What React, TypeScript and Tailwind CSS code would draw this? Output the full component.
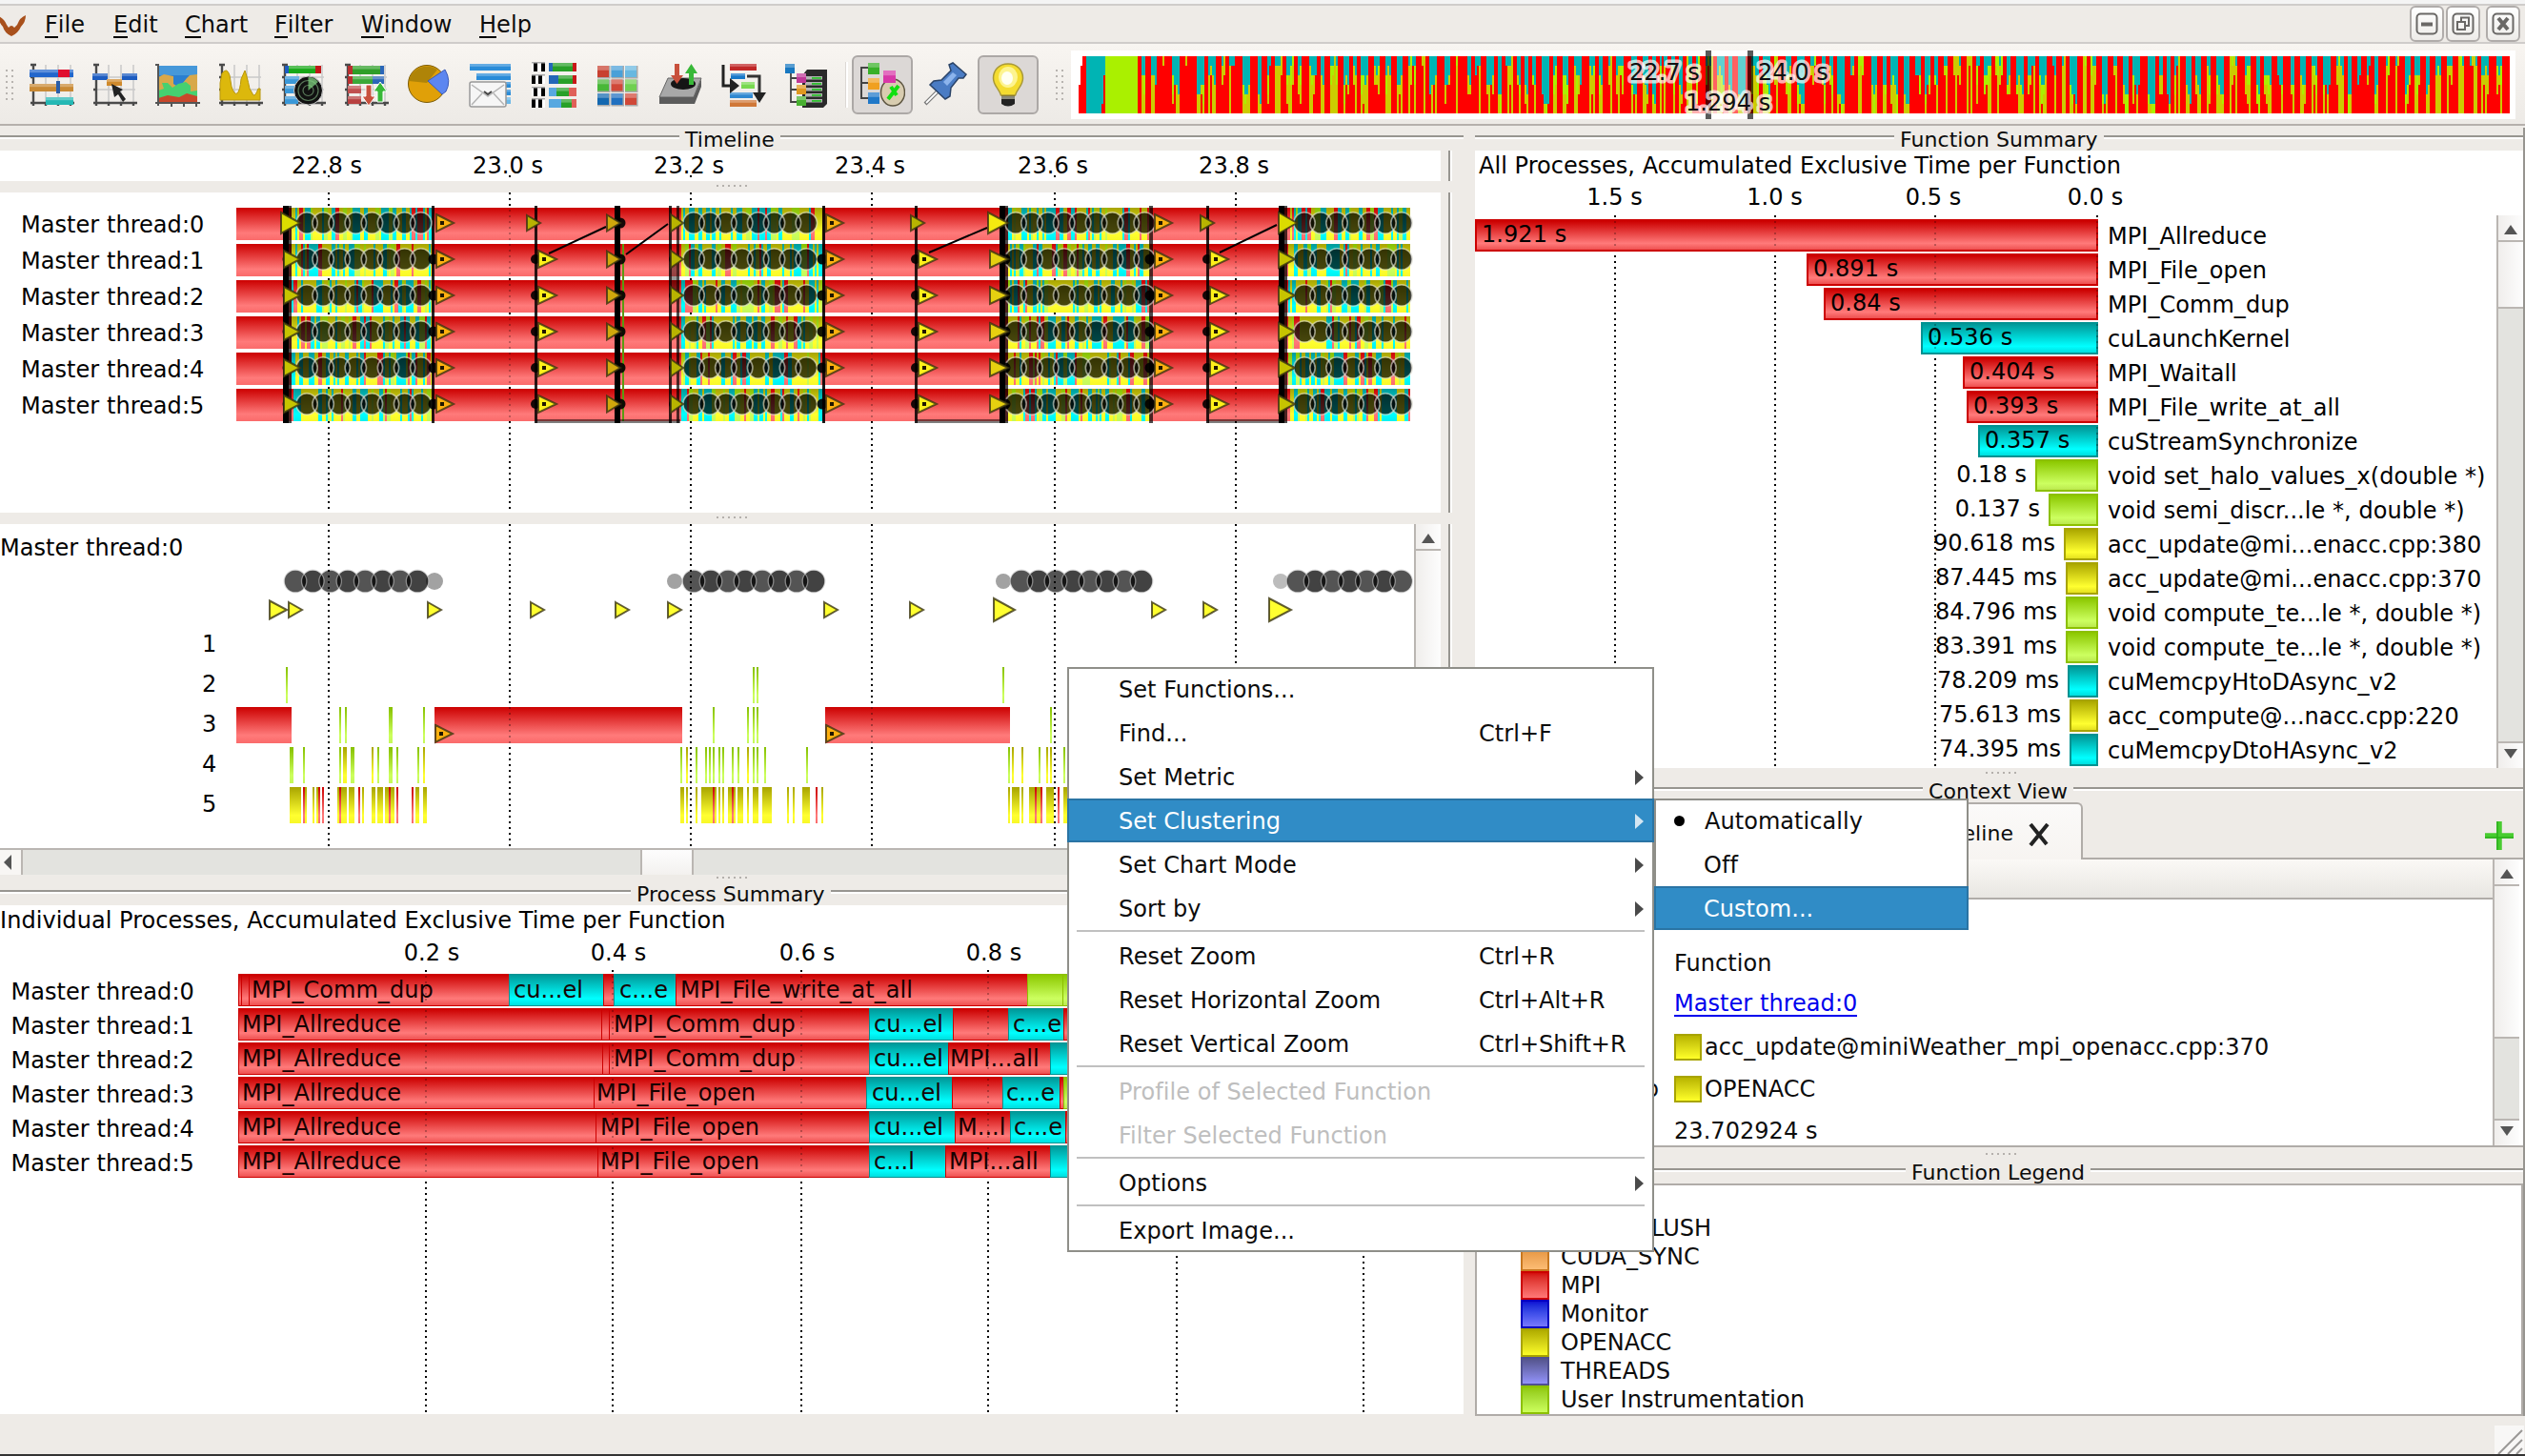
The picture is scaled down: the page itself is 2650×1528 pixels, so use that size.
import React from "react";

/* ---------- shared helpers ---------- */

type Hue = "r" | "c" | "g" | "y";

const EDGE: Record<string, string> = { r: "#cc0000", c: "#009292", g: "#8cc000", y: "#a8a400" };

function rng(seed: number) {
  let s = seed;
  return () => {
    s = (s * 1664525 + 1013904223) % 4294967296;
    return s / 4294967296;
  };
}

function Gradients() {
  const g = (id: string, a: string, b: string, c: string) => (
    <linearGradient key={id} id={id} x1="0" y1="0" x2="0" y2="1">
      <stop offset="0" stopColor={a} />
      <stop offset="0.78" stopColor={b} />
      <stop offset="1" stopColor={c} />
    </linearGradient>
  );
  return (
    <svg width="0" height="0" className="absolute">
      <defs>
        {g("r", "#cc0000", "#ff7a7a", "#fa6a6a")}
        {g("c", "#009a9a", "#00ffff", "#00f0f0")}
        {g("g", "#86c000", "#ccff5c", "#c4f85a")}
        {g("y", "#a8a400", "#ffff30", "#f8f828")}
        {g("rb", "#cc0000", "#ff7a7a", "#ee5050")}
        {g("cb", "#009898", "#00ffff", "#00dede")}
        {g("gb", "#8cc800", "#ccff60", "#bce850")}
        {g("yb", "#aca800", "#ffff30", "#e4e020")}
      </defs>
    </svg>
  );
}

function VDots({ x, y1, y2, o = 1 }: { x: number; y1: number; y2: number; o?: number }) {
  return <line x1={x} x2={x} y1={y1} y2={y2} stroke="#000" strokeWidth={2} strokeDasharray="2 4" opacity={o} shapeRendering="crispEdges" />;
}

function Title({ text, left }: { text: string; left: string }) {
  return (
    <div className="flex h-6 shrink-0 items-start">
      <div className={`mt-2 h-1 shrink-0 border-t-2 border-[#979590] bg-white ${left}`} />
      <div className="h-6 shrink-0 px-[6px] text-[22px] leading-[25px] whitespace-nowrap">{text}</div>
      <div className="mt-2 h-1 flex-1 border-t-2 border-[#979590] bg-white" />
    </div>
  );
}

function Grip({ pad }: { pad: string }) {
  return (
    <div className={`flex gap-1 pt-1 ${pad}`}>
      {[0, 1, 2, 3, 4, 5].map((i) => (
        <div key={i} className="size-[2px] bg-[#b4b0ac]" />
      ))}
    </div>
  );
}

/* ---------- toolbar icons ---------- */

function Frame() {
  return (
    <g>
      <path d="M18 3V43M31 3V43M44 3V43M5 16H46M5 29H46" stroke="#c9c9c9" strokeWidth="1.5" fill="none" />
      <path d="M5 2V46M2 43H48M2 3H8M2 16H5M2 29H5M18 43V46M31 43V46M44 43V46" stroke="#4a4a4a" strokeWidth="2.4" fill="none" />
    </g>
  );
}

function Sq({ x, y, s = 11, h, c }: { x: number; y: number; s?: number; h?: number; c: string }) {
  return (
    <g>
      <rect x={x} y={y} width={s} height={h ?? s} fill={c} />
      <rect x={x} y={y} width={s} height={(h ?? s) / 2.5} fill="#fff" opacity="0.28" />
    </g>
  );
}

const ICONS: React.ReactNode[] = [
  <>
    <Frame />
    <Sq x={1} y={8} s={46} h={8} c="#2266cc" />
    <rect x="31" y="8" width="12" height="8" fill="#e01030" />
    <Sq x={1} y={23} s={46} h={8} c="#c98a35" />
    <rect x="29" y="20" width="4" height="13" fill="#2b5ea8" />
    <Sq x={18} y={37} s={29} h={8} c="#25b8b4" />
  </>,
  <>
    <Frame />
    <Sq x={1} y={12} s={16} h={7} c="#1d5cc0" />
    <Sq x={32} y={12} s={16} h={7} c="#1d5cc0" />
    <Sq x={16} y={18} s={16} h={7} c="#d08a2c" />
    <path d="M21 23l12 6-3 2 6 8-3 3-5-8-4 3z" fill="#222" />
  </>,
  <>
    <rect x="3" y="4" width="42" height="40" fill="#2a7fd0" />
    <rect x="3" y="4" width="42" height="10" fill="#5aa8e0" opacity=".6" />
    <path d="M4 16l6-3 10 2v8l6 4 8-10 3-3 8-1v20H4z" fill="#d8a84a" />
    <path d="M4 30l6-2-2-6h6l5 5 6-4 8-2 5 4v6l7-1v8H4z" fill="#46d070" />
    <path d="M4 38l10-3 12 2 8-4 11 3v8H4z" fill="#c8472a" />
    <path d="M4 2V46M1 3H5M1 43H48M18 43V47M31 43V47M44 43V47" stroke="#555" strokeWidth="2" fill="none" />
  </>,
  <>
    <Frame />
    <path d="M3 40V22L5 12Q10 5 13 14L15 26Q18 35 21 33Q24 30 25 18L29 9Q31 14 34 28L38 35Q40 36 43 28L45 28V40Z" fill="#dcb80c" stroke="#b8960a" strokeWidth="1" />
  </>,
  <>
    <Frame />
    <Sq x={5} y={4} s={38} h={8} c="#18a818" />
    <rect x="5" y="4" width="4" height="8" fill="#1d5cc0" />
    <rect x="37" y="4" width="6" height="8" fill="#c01818" />
    <Sq x={5} y={15} s={15} h={8} c="#3a98d8" />
    <Sq x={5} y={25} s={12} h={8} c="#3a98d8" />
    <Sq x={5} y={36} s={14} h={8} c="#3a98d8" />
    <circle cx="29.500" cy="30" r="15" fill="#111" stroke="#ccc" strokeWidth="1" />
    <circle cx="29.500" cy="30" r="10.500" fill="none" stroke="#5a7a5a" strokeWidth="1.200" />
    <circle cx="29.500" cy="30" r="5.500" fill="none" stroke="#5a7a5a" strokeWidth="1.200" />
    <path d="M29.500 30V16A14 14 0 0 1 40 21Z" fill="#7fd07f" opacity=".75" />
  </>,
  <>
    <Frame />
    <Sq x={5} y={4} s={38} h={9} c="#2f9e28" />
    <rect x="5" y="4" width="5" height="9" fill="#b83030" />
    <rect x="39" y="4" width="4" height="9" fill="#2a66b8" />
    <Sq x={5} y={15} s={38} h={8} c="#2a66b8" />
    <Sq x={5} y={15} s={26} h={8} c="#3aa838" />
    <rect x="5" y="15" width="5" height="8" fill="#b83030" />
    <Sq x={5} y={25} s={14} h={8} c="#c05050" />
    <Sq x={5} y={36} s={14} h={8} c="#b84040" />
    <path d="M24 24h6v12h4l-7 10-7-10h4z" fill="#c8503c" stroke="#fff" />
    <path d="M36 42V31h-4l7-10 7 10h-4v11z" fill="#38b838" stroke="#fff" />
  </>,
  <>
    <circle cx="22" cy="23" r="19.500" fill="#e0a008" stroke="#7a5a04" />
    <path d="M3 20A19.500 19.500 0 0 1 33 8L22 22Z" fill="#9a7808" opacity=".7" />
    <path d="M23 20L41 8Q48 20 42 31L38 34Z" fill="#5c86f0" stroke="#3a5ab8" />
  </>,
  <>
    <Sq x={1} y={2} s={43} h={7} c="#2a8cd8" />
    <Sq x={8} y={12} s={36} h={7} c="#2a8cd8" />
    <Sq x={15} y={21} s={29} h={6} c="#2a8cd8" />
    <Sq x={38} y={29} s={6} h={6} c="#2a8cd8" />
    <Sq x={38} y={37} s={6} h={7} c="#6ab8e8" />
    <rect x="1" y="21" width="38" height="26" rx="2" fill="#f6f6f6" stroke="#999" strokeWidth="1.500" />
    <path d="M3 24L20 36L37 24M3 45L14 33M37 45L26 33" fill="none" stroke="#b4b4b4" strokeWidth="1.500" />
    <path d="M16 31l4 3 4-3" fill="none" stroke="#444" strokeWidth="2" />
  </>,
  <>
    {[0, 13, 26, 38].map((y, i) => (
      <g key={y}>
        <rect x="0" y={y} width="14" height="10" fill="#fff" />
        <path d={`M${i % 2 ? 2 : 4} ${y}V${y + 10}M${i % 2 ? 9 : 12} ${y}V${y + 10}`} stroke="#000" strokeWidth="4" />
        <rect x="0" y={y} width="14" height="1.500" fill="#aaa" />
        <Sq x={18} y={y + 1} s={29} h={9} c="#28a028" />
        <rect x="18" y={y + 1} width={[4, 10, 8, 13][i]} height="9" fill={i > 1 ? "#58a8e0" : "#2468b8"} />
        <rect x={[43, 43, 39, 42][i]} y={y + 1} width={[4, 4, 8, 5][i]} height="9" fill={i > 1 ? "#e06058" : "#c81818"} />
      </g>
    ))}
  </>,
  <>
    {["#c84030", "#4aa0d8", "#68b8e0", "#48b838", "#d04838", "#70d050", "#1468b0", "#2070c0", "#d04838"].map((c, i) => (
      <g key={i}>
        <rect x={3 + (i % 3) * 14.5} y={4 + Math.floor(i / 3) * 14.5} width="13.500" height="13.500" fill="#aaa" />
        <Sq x={3 + (i % 3) * 14.5} y={4 + Math.floor(i / 3) * 14.5} s={12} c={c} />
      </g>
    ))}
  </>,
  <>
    <path d="M11 17H46L38 37H2Z" fill="#a8a8a8" stroke="#666" />
    <path d="M2 37H38L46 18V26L39 44H2Z" fill="#5c5c5c" />
    <ellipse cx="27" cy="23" rx="13" ry="6" fill="#151515" />
    <path d="M18 2h5v12h4l-6.500 9-6.500-9h4z" fill="#c8503c" />
    <path d="M33 24V12h-4l6.500-10 6.500 10h-4v12z" fill="#38b838" />
  </>,
  <>
    <Sq x={10} y={2} s={28} h={7} c="#c02828" />
    <Sq x={11} y={12} s={15} h={6} c="#1878c8" />
    <Sq x={22} y={21} s={14} h={7} c="#78d850" />
    <Sq x={10} y={32} s={24} h={6} c="#3088d0" />
    <Sq x={10} y={40} s={28} h={7} c="#d07838" />
    <path d="M3 3V25H12" stroke="#222" strokeWidth="3" fill="none" />
    <path d="M10 17l10 8-10 8z" fill="#222" />
    <path d="M28 15H41V34" stroke="#333" strokeWidth="3" fill="none" />
    <path d="M34 32h14l-7 11z" fill="#222" />
  </>,
  <>
    <path d="M8 10V42H16M8 17H14M8 29H14" stroke="#444" strokeWidth="1.800" fill="none" />
    <path d="M25 8H46V44L42 48H20V14Z" fill="#2a2a2a" />
    {[15, 21, 27, 33, 39].map((y) => (
      <g key={y}>
        <rect x="23" y={y} width="18" height="3.500" fill="#b4b4b4" />
        <rect x="30" y={y + 1} width="10" height="1.800" fill="#30c030" />
      </g>
    ))}
    <Sq x={2} y={2} s={10} c="#1878c0" />
    <Sq x={14} y={12} s={10} c="#c03898" />
    <Sq x={14} y={24} s={10} c="#e09820" />
    <Sq x={14} y={36} s={10} c="#48b030" />
  </>,
];

const ICON_TREE = (
  <>
    <path d="M12 6H2V38H10M2 22H10" stroke="#444" strokeWidth="2" fill="none" />
    <Sq x={9} y={1} s={12} c="#38b028" />
    <Sq x={9} y={17} s={12} c="#f0a020" />
    <Sq x={9} y={32} s={12} c="#2078c8" />
    <ellipse cx="35" cy="32" rx="12.500" ry="14" fill="#d8ccb0" stroke="#5c5440" strokeWidth="1.500" />
    <path d="M30 39L41 25M33 26L39 35" stroke="#10e010" strokeWidth="4" />
    <Sq x={25} y={9} s={13} c="#d838a8" />
  </>
);
const ICON_PIN = (
  <>
    <path d="M3 44L17 30" stroke="#777" strokeWidth="4" />
    <path d="M4 43L16 31" stroke="#fff" strokeWidth="1.800" />
    <path d="M28 3L32 1L46 13L43 17L38 17L30 27L29 36L24 39L8 24L12 20L20 19L30 9Z" fill="#4a7cc4" stroke="#2b4468" strokeWidth="1.500" />
    <path d="M22 21L32 11L36 14L26 25Z" fill="#8cb4ec" />
  </>
);
const ICON_BULB = (
  <>
    <path d="M17 35H31V44Q24 49 17 44Z" fill="#222" />
    <path d="M17 36H31V39H17Z" fill="#8a8a7a" />
    <path d="M24 2C14 2 8.500 9 8.500 17C8.500 25 14 27 16.500 35H31.500C34 27 39.500 25 39.500 17C39.500 9 34 2 24 2Z" fill="#f4dc30" stroke="#a89838" strokeWidth="1.500" />
    <ellipse cx="24" cy="16" rx="10" ry="11" fill="#fdf490" />
    <ellipse cx="23" cy="17" rx="6" ry="7" fill="#fffff0" />
  </>
);

function Icon({ children }: { children: React.ReactNode }) {
  return (
    <svg viewBox="0 0 48 48" className="size-12 shrink-0">
      {children}
    </svg>
  );
}

function DotHandle() {
  return (
    <div className="grid shrink-0 grid-cols-2 gap-1">
      {Array.from({ length: 12 }, (_, i) => (
        <div key={i} className="size-[2px] bg-[#b8b4b0]" />
      ))}
    </div>
  );
}

/* ---------- trace overview ---------- */

function Navigator() {
  const rnd = rng(77);
  const out: React.ReactNode[] = [];
  const put = (x: number, w: number, a: number, b: number, c: string) =>
    b > a && out.push(<rect key={out.length} x={x} width={w} y={6 + a * 10} height={(b - a) * 10} fill={c} />);
  const RED = "#ff0000", TEAL = "#00b4b4", GREEN = "#aaf000", OLIVE = "#cccc00";
  put(8, 10, 3, 6, RED);
  put(10, 8, 1, 3, RED);
  put(12, 4, 0, 1, RED);
  put(16, 20, 0, 6, TEAL);
  put(34, 2, 2, 5, RED);
  put(32, 4, 5, 6, RED);
  put(36, 34, 0, 6, GREEN);
  let x = 70;
  while (x < 1510) {
    const rw = 4 + 2 * Math.floor(rnd() * 2.3);
    put(x, Math.min(rw, 1510 - x), 0, 6, RED);
    x += rw;
    const n = 2 + Math.floor(rnd() * 3);
    let t = 1 + Math.floor(rnd() * 3);
    for (let i = 0; i < n && x < 1510; i++, x += 2) {
      t = Math.max(0, Math.min(5, t + Math.floor(rnd() * 3) - 1));
      const g = Math.min(6, t + (rnd() < 0.35 ? 1 + Math.floor(rnd() * 2) : 0));
      const o = rnd() < 0.5 ? 6 : Math.min(6, g + Math.floor(rnd() * 3));
      put(x, 2, 0, t, TEAL);
      put(x, 2, t, g, GREEN);
      put(x, 2, g, o, OLIVE);
      put(x, 2, o, 6, RED);
    }
  }
  const halo = { paintOrder: "stroke" as const };
  return (
    <svg width="1516" height="72" className="shrink-0 bg-white text-[24px]">
      <g shapeRendering="crispEdges">{out}</g>
      <rect x="672" y="6" width="38" height="60" fill="#fff" opacity=".38" />
      <rect x="666" y="0" width="6" height="72" fill="#000" opacity=".65" />
      <rect x="710" y="0" width="6" height="72" fill="#000" opacity=".65" />
      <g stroke="#fff" strokeOpacity=".7" strokeWidth="7" strokeLinejoin="round" fill="#111" style={halo}>
        <text x="586" y="31">22.7 s</text>
        <text x="721" y="31">24.0 s</text>
        <text x="645" y="63">1.294 s</text>
      </g>
    </svg>
  );
}

/* ---------- master timeline ---------- */

const TICKS = [345, 535, 725, 915, 1107, 1297];

function Tri({ x, w, y, h, fill, dot }: { x: number; w: number; y: number; h: number; fill: string; dot?: boolean }) {
  return (
    <g>
      <path d={`M${x + 1} ${y - h}L${x + w} ${y}L${x + 1} ${y + h}Z`} fill={fill} stroke="#3a3410" strokeOpacity=".8" strokeWidth="2" />
      {dot && <rect x={x + 5} y={y - 2} width="4" height="4" fill="#201800" />}
    </g>
  );
}

function Timeline() {
  const rnd = rng(4242);
  const rows = [0, 1, 2, 3, 4, 5];
  const noise: [number, number][] = [[306, 453], [715, 863], [1058, 1207], [1352, 1480]];
  const circles: [number, number, number][] = [[322, 17.1, 8], [728, 16.9, 8], [1066, 16.9, 9], [1369, 17, 7]];
  const centres = circles.flatMap(([x, p, n]) => Array.from({ length: n }, (_, i) => x + i * p));
  const lines: [number, number, number][] = [
    [297, 6, 1], [303, 3, 0.7], [453, 3, 0.85], [561, 3, 0.85], [645, 6, 1], [702, 3, 0.8], [705, 5, 0.4], [710, 3, 0.7],
    [863, 3, 0.9], [960, 3, 0.85], [1049, 6, 1], [1055, 3, 0.7], [1206, 4, 0.7], [1266, 3, 0.85], [1342, 6, 1], [1348, 3, 0.7],
  ];
  const Y = "#fff01a", OR = "#ffb010", OL = "#b8b400", YD = "#c6c400";
  return (
    <svg width="1512" height="336" viewBox="0 202 1512 336" className="shrink-0 bg-white">
      {TICKS.map((x) => (
        <VDots key={x} x={x} y1={202} y2={538} />
      ))}
      {rows.map((k) => {
        const y = 218 + 38 * k;
        return (
          <g key={k}>
            <text x="22" y={y + 25.5}>{`Master thread:${k}`}</text>
            <rect x="248" y={y} width="1232" height="34" fill="url(#r)" />
            {TICKS.map((x) => (
              <VDots key={x} x={x} y1={y + ((((202 - y) % 6) + 6) % 6)} y2={y + 34} o={0.25} />
            ))}
            <g shapeRendering="crispEdges">
              {noise.flatMap(([a, b]) => {
                const r: React.ReactNode[] = [];
                for (let x = a; x < b; ) {
                  const w = Math.min(rnd() < 0.6 ? 2 : 4, b - x);
                  const v = rnd();
                  const c: Hue = v < 0.48 ? "y" : v < 0.77 ? "c" : v < 0.89 ? "g" : "r";
                  r.push(<rect key={x} x={x} y={y} width={w} height="34" fill={`url(#${c})`} />);
                  x += w;
                }
                return r;
              })}
            </g>
          </g>
        );
      })}
      <g shapeRendering="crispEdges">
        <rect x="653" y="256" width="1.500" height="186" fill="#5a9a10" />
        {lines.map(([x, w, o]) => (
          <rect key={x} x={x} y={x === 705 ? 270 : 216} width={w} height={x === 705 ? 40 : 228} fill="#000" opacity={o} />
        ))}
        <path d="M563 442H714M962 442H1050M1268 442H1343" stroke="#000" strokeOpacity=".5" strokeWidth="4" />
      </g>
      <path d="M576 266L636 238M657 267L701 235M975 265L1036 239M1280 265L1340 236" stroke="#000" strokeWidth="2" />
      {rows.map((k) => {
        const y = 234 + 38 * k;
        const first = k === 0;
        return (
          <g key={k}>
            {centres.map((x) => (
              <circle key={x} cx={x} cy={y} r="10.800" fill="#000" fillOpacity=".72" />
            ))}
            {centres.map((x) => (
              <circle key={x} cx={x} cy={y} r="11.200" fill="none" stroke="#dcdcd0" strokeOpacity=".62" strokeWidth="1.600" />
            ))}
            {[302, 455, 651, 863, 1055, 1207, 1348].map((x) => !(first && x !== 651) && <circle key={x} cx={x} cy={y} r="5.500" fill="#000" opacity=".9" />)}
            {!first && [562, 707, 961, 1267].map((x) => <circle key={x} cx={x} cy={y} r="5" fill="#000" opacity=".9" />)}
            <Tri x={first ? 294 : 297} w={first ? 21 : 18} y={y} h={first ? 11 : 9} fill={first ? "#dcdc00" : YD} />
            {[457, 866, 1211].map((x) => (
              <Tri key={x} x={x} w={19} y={y} h={9} fill={OR} dot />
            ))}
            {first ? (
              <>
                <Tri x={552} w={15} y={y} h={8} fill={OL} />
                <Tri x={955} w={15} y={y} h={8} fill={OL} />
                <Tri x={1259} w={15} y={y} h={8} fill={OL} />
              </>
            ) : (
              [564, 963, 1269].map((x) => <Tri key={x} x={x} w={20} y={y} h={9} fill={Y} dot />)
            )}
            <Tri x={636} w={15} y={y} h={8.5} fill="#d0a80c" />
            <Tri x={703} w={14} y={y} h={9} fill={OL} />
            <Tri x={first ? 1036 : 1038} w={first ? 22 : 20} y={y} h={first ? 11 : 9} fill={first ? "#f4ea10" : "#e6d010"} />
            <Tri x={1341} w={first ? 20 : 18} y={y} h={first ? 11 : 9} fill={first ? "#dcdc00" : YD} />
          </g>
        );
      })}
    </svg>
  );
}

/* ---------- single process timeline ---------- */

const GREY: [number, number, number, number][] = [
  [310, 18.3, 8, 456], [728, 18, 8, 708], [1072, 18, 8, 1053], [1362, 18.1, 7, 1344],
];

const STRIPES: Record<number, [Hue, number, number][]> = {
  2: [["g", 300, 2], ["g", 790, 2], ["g", 794, 2], ["g", 1052, 2]],
  3: [
    ["r", 248, 58], ["r", 456, 260], ["r", 866, 194], ["g", 356, 2], ["g", 362, 2], ["g", 408, 4], ["g", 444, 2],
    ["g", 748, 2], ["g", 784, 2], ["g", 790, 2], ["g", 794, 2], ["g", 1102, 2],
  ],
  4: [
    ["g", 304, 4], ["g", 318, 2], ["g", 356, 2], ["y", 360, 4], ["g", 368, 4], ["y", 390, 2], ["g", 396, 2], ["g", 408, 4],
    ["g", 416, 2], ["g", 438, 2], ["y", 444, 2], ["g", 714, 2], ["y", 720, 2], ["g", 730, 2], ["g", 740, 2], ["g", 744, 2],
    ["g", 748, 2], ["g", 754, 2], ["g", 758, 2], ["g", 768, 2], ["g", 774, 2], ["y", 784, 2], ["g", 790, 2], ["g", 794, 2],
    ["g", 802, 2], ["g", 846, 2], ["g", 1058, 2], ["y", 1062, 2], ["y", 1072, 2], ["g", 1090, 2], ["y", 1098, 2], ["y", 1102, 2], ["g", 1116, 2],
  ],
  5: [
    ["y", 304, 12], ["r", 318, 2], ["y", 320, 2], ["y", 328, 2], ["y", 332, 2], ["r", 334, 2], ["r", 338, 2], ["y", 354, 10],
    ["r", 356, 2], ["y", 366, 6], ["r", 376, 2], ["y", 380, 2], ["y", 390, 4], ["y", 396, 6], ["y", 404, 10], ["r", 408, 2],
    ["r", 416, 2], ["r", 432, 2], ["y", 436, 4], ["y", 444, 4], ["y", 714, 4], ["y", 720, 2], ["y", 730, 2], ["y", 736, 16],
    ["r", 748, 2], ["y", 754, 2], ["y", 758, 2], ["y", 764, 8], ["r", 768, 2], ["y", 774, 6], ["y", 784, 2], ["y", 790, 6],
    ["y", 800, 10], ["y", 826, 2], ["y", 832, 2], ["y", 842, 8], ["r", 856, 2], ["y", 862, 2], ["y", 1058, 2], ["y", 1062, 8],
    ["y", 1072, 2], ["y", 1080, 14], ["r", 1086, 2], ["r", 1092, 2], ["y", 1098, 8], ["r", 1110, 2], ["y", 1116, 4],
  ],
};

const FLAGS: [number, number, number][] = [
  [282, 19, 9.5], [302, 15, 8], [448, 15, 8], [556, 15, 8], [645, 15, 8], [700, 15, 8], [864, 15, 8],
  [954, 15, 8], [1042, 23, 12], [1208, 15, 8], [1262, 15, 8], [1331, 24, 12],
];

function ProcessTimeline() {
  return (
    <svg width="1484" height="340" viewBox="0 550 1484 340" className="shrink-0 bg-white">
      {GREY.map(([x, p, n, s]) => (
        <g key={x}>
          <circle cx={s} cy="610" r={s === 456 ? 9 : 8} fill={s > 1300 ? "#bcbcbc" : "#a2a2a2"} />
          {Array.from({ length: n }, (_, i) => (
            <circle key={i} cx={x + i * p} cy="610" r="11.500" fill="#000" fillOpacity={i % 2 ? 0.74 : 0.67} />
          ))}
          {Array.from({ length: n }, (_, i) => (
            <circle key={i} cx={x + i * p} cy="610" r="11.800" fill="none" stroke="#c4c4c4" strokeOpacity=".55" strokeWidth="1.300" />
          ))}
        </g>
      ))}
      {TICKS.map((x) => (
        <VDots key={x} x={x} y1={550} y2={890} />
      ))}
      <text x="0" y="583">Master thread:0</text>
      {FLAGS.map(([x, w, h]) => (
        <Tri key={x} x={x} w={w} y={640} h={h} fill="#ffff30" />
      ))}
      {[1, 2, 3, 4, 5].map((n) => (
        <text key={n} x="212" y={641.5 + 42 * n}>{n}</text>
      ))}
      <g shapeRendering="crispEdges">
        {[2, 3, 4, 5].map((n) =>
          STRIPES[n].map(([c, x, w]) => <rect key={`${n}-${x}-${c}`} x={x} y={616 + 42 * n} width={w} height="38" fill={`url(#${c})`} />),
        )}
      </g>
      <VDots x={535} y1={742} y2={780} o={0.3} />
      <VDots x={915} y1={742} y2={780} o={0.3} />
      <Tri x={456} w={19} y={770} h={9} fill="#ffb010" dot />
      <Tri x={866} w={19} y={770} h={9} fill="#ffb010" dot />
    </svg>
  );
}

/* ---------- process summary ---------- */

type Seg = [Hue, number, number, string?, number?];
const SUMMARY: Seg[][] = [
  [["r", 250, 253], ["r", 253, 261], ["r", 261, 534, "MPI_Comm_dup", 263], ["c", 534, 633, "cu...el", 538], ["r", 633, 644], ["c", 644, 709, "c...e", 649], ["r", 709, 1078, "MPI_File_write_at_all", 713], ["g", 1078, 1115], ["g", 1115, 1180]],
  [["r", 250, 631, "MPI_Allreduce", 253], ["r", 631, 639], ["r", 639, 912, "MPI_Comm_dup", 643], ["c", 912, 1000, "cu...el", 916], ["r", 1000, 1058], ["c", 1058, 1116, "c...e", 1062], ["r", 1116, 1180]],
  [["r", 250, 632, "MPI_Allreduce", 253], ["r", 632, 639], ["r", 639, 912, "MPI_Comm_dup", 643], ["c", 912, 995, "cu...el", 916], ["r", 995, 1102, "MPI...all", 996], ["c", 1102, 1180]],
  [["r", 250, 623, "MPI_Allreduce", 253], ["r", 623, 909, "MPI_File_open", 625], ["c", 909, 999, "cu...el", 914], ["r", 999, 1052], ["c", 1052, 1112, "c...e", 1055], ["r", 1112, 1116], ["g", 1116, 1180]],
  [["r", 250, 625, "MPI_Allreduce", 253], ["r", 625, 912, "MPI_File_open", 629], ["c", 912, 1002, "cu...el", 916], ["r", 1002, 1060, "M...l", 1004], ["c", 1060, 1118, "c...e", 1063], ["r", 1118, 1180]],
  [["r", 250, 627, "MPI_Allreduce", 253], ["r", 627, 912, "MPI_File_open", 629], ["c", 912, 992, "c...l", 916], ["r", 992, 1102, "MPI...all", 995], ["c", 1102, 1180]],
];

function ProcessSummary() {
  const ticks = [447, 643, 841, 1037, 1235, 1431];
  return (
    <svg width="1536" height="534" viewBox="0 950 1536 534" className="shrink-0 bg-white">
      <text x="0" y="973.500">Individual Processes, Accumulated Exclusive Time per Function</text>
      {["0.2 s", "0.4 s", "0.6 s", "0.8 s"].map((t, i) => (
        <text key={t} x={ticks[i] + 6} y="1007.500" textAnchor="middle">{t}</text>
      ))}
      {ticks.map((x) => (
        <VDots key={x} x={x} y1={1018} y2={1484} />
      ))}
      {SUMMARY.map((row, k) => {
        const y = 1022 + 36 * k;
        return (
          <g key={k}>
            <text x="11.500" y={y + 26.5}>{`Master thread:${k}`}</text>
            {row.map(([c, a, b]) => (
              <g key={a} shapeRendering="crispEdges">
                <rect x={a} y={y} width={b - a} height="34" fill={EDGE[c]} />
                <rect x={a + 1} y={y + 1} width={b - a - 1.5} height="32" fill={`url(#${c}b)`} />
              </g>
            ))}
            {ticks.slice(0, 4).map((x) => (
              <VDots key={x} x={x} y1={y + 2} y2={y + 32} o={0.25} />
            ))}
            {row.map(([, a, , t, tx]) => t && <text key={a} x={(tx ?? a) + 1} y={y + 24.5} fill="#160000">{t}</text>)}
          </g>
        );
      })}
    </svg>
  );
}

/* ---------- function summary ---------- */

const FUNCS: [Hue, number, string, string][] = [
  ["r", 1548, "1.921 s", "MPI_Allreduce"],
  ["r", 1896, "0.891 s", "MPI_File_open"],
  ["r", 1914, "0.84 s", "MPI_Comm_dup"],
  ["c", 2016, "0.536 s", "cuLaunchKernel"],
  ["r", 2060, "0.404 s", "MPI_Waitall"],
  ["r", 2064, "0.393 s", "MPI_File_write_at_all"],
  ["c", 2076, "0.357 s", "cuStreamSynchronize"],
  ["g", 2136, "0.18 s", "void set_halo_values_x(double *)"],
  ["g", 2150, "0.137 s", "void semi_discr...le *, double *)"],
  ["y", 2166, "90.618 ms", "acc_update@mi...enacc.cpp:380"],
  ["y", 2168, "87.445 ms", "acc_update@mi...enacc.cpp:370"],
  ["g", 2168, "84.796 ms", "void compute_te...le *, double *)"],
  ["g", 2168, "83.391 ms", "void compute_te...le *, double *)"],
  ["c", 2170, "78.209 ms", "cuMemcpyHtoDAsync_v2"],
  ["y", 2172, "75.613 ms", "acc_compute@...nacc.cpp:220"],
  ["c", 2172, "74.395 ms", "cuMemcpyDtoHAsync_v2"],
];

function FunctionSummary() {
  const ticks = [1695, 1863, 2031, 2201];
  return (
    <svg width="1072" height="580" viewBox="1548 226 1072 580" className="shrink-0 bg-white">
      {ticks.map((x) => (
        <VDots key={x} x={x} y1={226} y2={806} />
      ))}
      {FUNCS.map(([c, x, v, n], k) => {
        const y = 230 + 36 * k;
        const inside = k < 7;
        return (
          <g key={k}>
            <g shapeRendering="crispEdges">
              <rect x={x} y={y} width={2202 - x} height="34" fill={EDGE[c]} />
              <rect x={x + 2} y={y + 2} width={2198 - x} height="30" fill={`url(#${c}b)`} />
            </g>
            {inside && ticks.filter((t) => t > x).map((t) => <VDots key={t} x={t} y1={y + 2} y2={y + 32} o={0.25} />)}
            <text x={inside ? x + 7 : x - 9} y={y + 23.5} textAnchor={inside ? "start" : "end"}>{v}</text>
            <text x="2212" y={y + 25.5}>{n}</text>
          </g>
        );
      })}
    </svg>
  );
}

function Arrow({ d, fill = "#555" }: { d: "u" | "d" | "l" | "r"; fill?: string }) {
  const p = { u: "M1 13L8 3L15 13Z", d: "M1 3L8 13L15 3Z", l: "M12 0L4 8L12 16Z", r: "M4 0L13 8L4 16Z" }[d];
  return (
    <svg viewBox="0 0 16 16" className="size-4 shrink-0">
      <path d={p} fill={fill} />
    </svg>
  );
}

function VScroll({ thumb }: { thumb: string }) {
  return (
    <div className="flex w-7 shrink-0 flex-col border-l-2 border-[#bab6b2] bg-[#e3e3df]">
      <div className="flex h-7 items-center justify-center border-b-2 border-[#bab6b2] bg-gradient-to-r from-[#f0eeec] to-[#fdfdfd] pt-1">
        <Arrow d="u" />
      </div>
      <div className={`border-b-2 border-[#bab6b2] bg-gradient-to-r from-[#f0eeec] to-[#fdfdfd] ${thumb}`} />
      <div className="flex-1" />
      <div className="flex h-7 items-center justify-center border-t-2 border-[#bab6b2] bg-gradient-to-r from-[#f0eeec] to-[#fdfdfd] pb-1">
        <Arrow d="d" />
      </div>
    </div>
  );
}

/* ---------- context menu ---------- */

type Item = { t: string; k?: string; sub?: boolean; on?: boolean; off?: boolean; sep?: boolean };
const MENU: Item[] = [
  { t: "Set Functions..." },
  { t: "Find...", k: "Ctrl+F" },
  { t: "Set Metric", sub: true },
  { t: "Set Clustering", sub: true, on: true },
  { t: "Set Chart Mode", sub: true },
  { t: "Sort by", sub: true, sep: true },
  { t: "Reset Zoom", k: "Ctrl+R" },
  { t: "Reset Horizontal Zoom", k: "Ctrl+Alt+R" },
  { t: "Reset Vertical Zoom", k: "Ctrl+Shift+R", sep: true },
  { t: "Profile of Selected Function", off: true },
  { t: "Filter Selected Function", off: true, sep: true },
  { t: "Options", sub: true, sep: true },
  { t: "Export Image..." },
];

function ContextMenu() {
  return (
    <>
      <div className="absolute top-[700px] left-[1120px] flex h-[614px] w-[616px] flex-col bg-white outline-2 -outline-offset-2 outline-[#8f8f89]">
        {MENU.map((m) => (
          <React.Fragment key={m.t}>
            <div
              className={`flex h-[46px] shrink-0 items-center pt-px pr-2 pl-[54px] ${
                m.on ? "relative bg-[#308cc6] text-white outline-2 -outline-offset-2 outline-[#2a74a4]" : m.off ? "text-[#bebebe]" : ""
              }`}
            >
              <span className="w-[378px] whitespace-nowrap">{m.t}</span>
              <span className="flex-1 whitespace-nowrap">{m.k}</span>
              {m.sub && <Arrow d="r" fill={m.on ? "#d4e6f2" : "#4a4a4a"} />}
            </div>
            {m.sep && <div className="mx-[10px] h-1 shrink-0 border-t-2 border-[#c0c0c0]" />}
          </React.Fragment>
        ))}
      </div>
      <div className="absolute top-[838px] left-[1736px] flex w-[330px] flex-col bg-white outline-2 -outline-offset-2 outline-[#8f8f89]">
        <div className="flex h-[46px] items-center gap-[21px] pt-px pl-[21px]">
          <span className="size-[11px] rounded-full bg-black" />
          Automatically
        </div>
        <div className="flex h-[46px] items-center pt-px pl-[52px]">Off</div>
        <div className="relative flex h-[46px] items-center bg-[#308cc6] pt-px pl-[52px] text-white outline-2 -outline-offset-2 outline-[#2a74a4]">Custom...</div>
      </div>
    </>
  );
}

/* ---------- page ---------- */

const LEGEND: [string, string][] = [
  ["CUDA_FLUSH", "bg-linear-to-b from-[#c0a060] to-[#e8d0a0] border-[#a08040]"],
  ["CUDA_SYNC", "bg-linear-to-b from-[#e08c30] to-[#fcbc74] border-[#c87820]"],
  ["MPI", "bg-linear-to-b from-[#d40c0c] to-[#ff7878] border-[#cc0000]"],
  ["Monitor", "bg-linear-to-b from-[#1010d4] to-[#7878ff] border-[#0000c0]"],
  ["OPENACC", "bg-linear-to-b from-[#b0ac00] to-[#fcfc28] border-[#a8a400]"],
  ["THREADS", "bg-linear-to-b from-[#54548c] to-[#9494fc] border-[#505090]"],
  ["User Instrumentation", "bg-linear-to-b from-[#90c808] to-[#ccff5c] border-[#8cc000]"],
];

function MenuEntry({ t, w }: { t: string; w: string }) {
  return (
    <div className={`h-7 shrink-0 leading-7 ${w}`}>
      <span className="inline-block h-[28px] border-b-2 border-black leading-7">{t[0]}</span>
      {t.slice(1)}
    </div>
  );
}

function WinButton({ children }: { children: React.ReactNode }) {
  return (
    <div className="flex h-[38px] w-9 items-center justify-center rounded-md border-2 border-[#b0acaa] bg-gradient-to-b from-white to-[#eeece9]">
      <svg viewBox="0 0 24 24" className="size-6" fill="none" stroke="#6a6866" strokeWidth="2">
        <rect x="1.500" y="1.500" width="21" height="21" rx="4" />
        {children}
      </svg>
    </div>
  );
}

function Swatch() {
  return <span className="h-7 w-[29px] shrink-0 border-2 border-[#a8a400] bg-gradient-to-b from-[#b8b400] to-[#ffff28]" />;
}

export default function App() {
  return (
    <div className="relative flex h-[1528px] w-[2650px] flex-col overflow-hidden bg-[#eeebe7] font-['DejaVu_Sans',sans-serif] text-[24px] leading-7 tracking-[0.05px] text-[#0c0c0c]">
      <Gradients />
      <div className="h-1 shrink-0 bg-[#f4f4f4]" />
      <div className="flex h-[42px] shrink-0 items-start border-y-2 border-[#cfccca] pr-[5px]">
        <svg width="28" height="24" viewBox="0 0 28 24" className="mt-[9px] shrink-0">
          <path d="M-2 2Q4 4 7 11L9 14Q12 10 15 14L18 11Q21 3 27 1Q27 8 22 13Q19 20 12 23Q5 20 3 13Q-1 9-2 2Z" fill="#a8501c" />
        </svg>
        <div className="flex pt-[6px] pl-[19px]">
          <MenuEntry t="File" w="w-[72px]" />
          <MenuEntry t="Edit" w="w-[75px]" />
          <MenuEntry t="Chart" w="w-[94px]" />
          <MenuEntry t="Filter" w="w-[91px]" />
          <MenuEntry t="Window" w="w-[124px]" />
          <MenuEntry t="Help" w="w-[70px]" />
        </div>
        <div className="ml-auto flex gap-[2px]">
          <WinButton>
            <path d="M6 12.500H18" strokeWidth="4" />
          </WinButton>
          <WinButton>
            <path d="M10 10V5.500H18V14H14M6 10H14V18H6Z" />
          </WinButton>
          <div className="w-[2px]" />
          <WinButton>
            <path d="M7 6L17 18M17 6L7 18" strokeWidth="4" />
          </WinButton>
        </div>
      </div>
      <div className="flex h-[86px] shrink-0 items-center border-b-2 border-[#b5b0ac] bg-gradient-to-b from-[#f8f5f1] to-[#edeae6] pt-[2px] pl-[6px]">
        <DotHandle />
        <div className="flex gap-[18px] pl-4">
          {ICONS.map((ic, i) => (
            <Icon key={i}>{ic}</Icon>
          ))}
        </div>
        <div className="ml-[17px] h-12 w-[3px] border-l border-[#dcd8d4] bg-white" />
        <div className="ml-1 flex h-[62px] w-16 items-center justify-center rounded-md border-2 border-[#aca8a6] bg-[#dcd8d6]">
          <Icon>{ICON_TREE}</Icon>
        </div>
        <div className="mx-[10px]">
          <Icon>{ICON_PIN}</Icon>
        </div>
        <div className="flex h-[62px] w-16 items-center justify-center rounded-md border-2 border-[#aca8a6] bg-[#dcd8d6]">
          <Icon>{ICON_BULB}</Icon>
        </div>
        <div className="pr-2 pl-[18px]">
          <DotHandle />
        </div>
        <Navigator />
      </div>

      <div className="mt-[2px] flex h-[1352px] shrink-0 gap-3">
        <div className="flex w-[1536px] shrink-0 flex-col">
          <Title text="Timeline" left="w-[713px]" />
          <div className="flex h-8 shrink-0">
            <svg width="1512" height="32" viewBox="0 158 1512 32" className="bg-white">
              {["22.8 s", "23.0 s", "23.2 s", "23.4 s", "23.6 s", "23.8 s"].map((t, i) => (
                <g key={t}>
                  <text x={TICKS[i] - 2} y="181.500" textAnchor="middle">{t}</text>
                  <VDots x={TICKS[i]} y1={184} y2={186} />
                </g>
              ))}
            </svg>
            <div className="ml-2 w-1 border-l-2 border-[#979590] bg-white" />
          </div>
          <div className="h-3 shrink-0">
            <Grip pad="pl-[752px]" />
          </div>
          <div className="flex h-[336px] shrink-0">
            <Timeline />
            <div className="ml-2 w-1 border-l-2 border-[#979590] bg-white" />
          </div>
          <div className="h-3 shrink-0">
            <Grip pad="pl-[752px]" />
          </div>
          <div className="flex h-[340px] shrink-0">
            <ProcessTimeline />
            <VScroll thumb="h-[260px]" />
            <div className="ml-2 w-1 border-l-2 border-[#979590] bg-white" />
          </div>
          <div className="flex h-7 w-[1512px] shrink-0 border-t-2 border-[#bab6b2] bg-[#e3e3df]">
            <div className="flex w-6 items-center border-r-2 border-[#bab6b2] bg-[#f8f6f4]">
              <Arrow d="l" />
            </div>
            <div className="ml-[648px] w-14 border-x-2 border-[#bab6b2] bg-gradient-to-b from-[#fdfdfd] to-[#f3f1ef]" />
          </div>
          <div className="-mt-[2px] h-[10px] shrink-0">
            <Grip pad="pl-[752px]" />
          </div>
          <Title text="Process Summary" left="w-[662px]" />
          <ProcessSummary />
        </div>

        <div className="flex w-[1102px] shrink-0 flex-col border-r-2 border-[#979590]">
          <Title text="Function Summary" left="w-[440px]" />
          <svg width="1100" height="68" viewBox="1548 158 1100 68" className="shrink-0 bg-white">
            <text x="1552" y="181.500">All Processes, Accumulated Exclusive Time per Function</text>
            <g textAnchor="middle">
              <text x="1694.500" y="215">1.5 s</text>
              <text x="1862.500" y="215">1.0 s</text>
              <text x="2029" y="215">0.5 s</text>
              <text x="2199" y="215">0.0 s</text>
            </g>
          </svg>
          <div className="flex h-[580px] shrink-0">
            <FunctionSummary />
            <VScroll thumb="h-[70px]" />
          </div>
          <div className="h-3 shrink-0">
            <Grip pad="pl-[536px]" />
          </div>
          <Title text="Context View" left="w-[470px]" />

          <div className="flex h-[60px] shrink-0 items-stretch">
            <div className="flex w-[638px] items-center rounded-tr-md border-t-2 border-r-2 border-[#b0aca8] bg-gradient-to-b from-[#fbfaf9] to-[#f7f4f1] text-[22px]">
              <span className="w-[565px] pt-1 text-right whitespace-nowrap">Master Timeline</span>
              <svg width="28" height="24" viewBox="0 0 28 24" className="mt-[5px] ml-[13px]">
                <path d="M5 1L22 22M23 1L5 23" stroke="#222" strokeWidth="4" />
              </svg>
            </div>
            <div className="flex flex-1 items-center justify-end border-b-2 border-[#b0aca8] pt-[12px] pr-[9px]">
              <svg width="32" height="32" viewBox="0 0 32 32">
                <path d="M16 1V31M1 16H31" stroke="#48cc30" strokeWidth="5.500" />
                <path d="M14 1V31M1 18H31" stroke="#28b018" strokeWidth="1.500" />
              </svg>
            </div>
          </div>
          <div className="flex h-[302px] shrink-0 border-b-2 border-[#b0aca8] bg-white pr-1">
            <div className="flex flex-1 flex-col">
              <div className="h-[42px] shrink-0 border-b-2 border-[#b0aca8] bg-gradient-to-b from-[#fbf9f6] to-[#e8e6e2]" />
              <div className="flex gap-4 pt-[53px]">
                <div className="w-[193px] shrink-0 pt-[132px] text-right whitespace-nowrap">Function Group</div>
                <div className="flex flex-col">
                  <div className="h-[42px]">Function</div>
                  <div className="h-[38px]">
                    <span className="inline-block h-[28px] border-b-2 border-[#0000ee] leading-7 text-[#0000ee]">Master thread:0</span>
                  </div>
                  <div className="flex h-[44px] items-center gap-[3px]">
                    <Swatch />
                    acc_update@miniWeather_mpi_openacc.cpp:370
                  </div>
                  <div className="flex h-[44px] items-center gap-[3px]">
                    <Swatch />
                    OPENACC
                  </div>
                  <div className="flex h-[44px] items-center">23.702924 s</div>
                </div>
              </div>
            </div>
            <VScroll thumb="h-[160px]" />
          </div>
          <div className="h-[14px] shrink-0 pt-[2px]">
            <Grip pad="pl-[536px]" />
          </div>
          <Title text="Function Legend" left="w-[452px]" />
          <div className="flex h-[244px] shrink-0 flex-col justify-end border-2 border-[#b0aca8] bg-white pl-[46px]">
            {LEGEND.map(([t, c]) => (
              <div key={t} className="flex h-[30px] shrink-0 items-center gap-3">
                <div className={`h-[30px] w-[30px] border-2 ${c}`} />
                <span className="leading-[30px]">{t}</span>
              </div>
            ))}
          </div>
        </div>
      </div>

      <div className="flex flex-1 items-end justify-end border-b-2 border-[#333]">
        <svg width="31" height="30" viewBox="0 0 31 30" className="mr-px bg-[#f8f7f6]">
          <path d="M4 30L29 5M14 30L29 15M23 30L29 24" stroke="#9a9896" strokeWidth="2" />
        </svg>
      </div>

      <ContextMenu />
    </div>
  );
}
